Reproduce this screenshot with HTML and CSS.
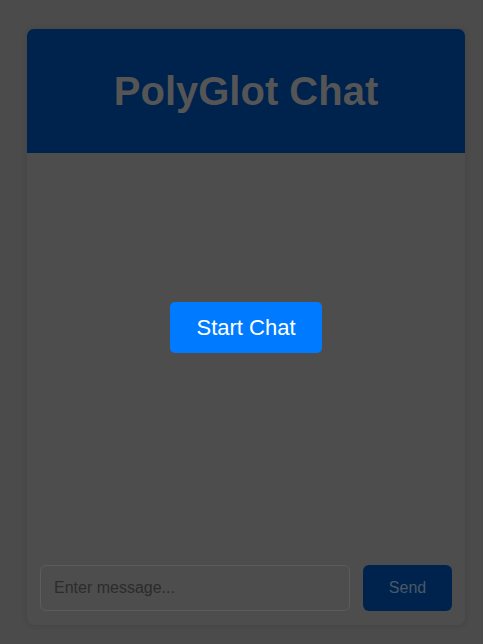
FILE: index.html
```html
<!DOCTYPE html>
<html lang="en">
<head>
<meta charset="utf-8">
<title>PolyGlot Chat</title>
<link rel="stylesheet" href="styles.css">
</head>
<body>
  <div class="chat">
    <header class="chat-header">
      <h1 class="chat-title">PolyGlot Chat</h1>
    </header>
    <main class="chat-messages"></main>
    <form class="chat-form">
      <input class="chat-input" type="text" placeholder="Enter message...">
      <button class="chat-send" type="button">Send</button>
    </form>
    <div class="chat-overlay">
      <button class="start-btn" type="button">Start Chat</button>
    </div>
  </div>
</body>
</html>
```

FILE: styles.css
```css
html, body {
  margin: 0;
  height: 100%;
}
body {
  background: #4b4b4b;
  font-family: "Liberation Sans", Arial, sans-serif;
  padding: 29px 18px 0 27px;
  box-sizing: border-box;
}
.chat {
  position: relative;
  width: 438px;
  height: 596px;
  background: #4d4d4d;
  border-radius: 7px;
  box-shadow: 0 0 6px rgba(0, 0, 0, 0.12);
  display: flex;
  flex-direction: column;
  overflow: hidden;
}
.chat-header {
  height: 124px;
  background: #00234d;
  display: flex;
  align-items: center;
  justify-content: center;
  flex-shrink: 0;
}
.chat-title {
  margin: 0;
  font-size: 40px;
  font-weight: bold;
  color: #555555;
  line-height: 1;
}
.chat-messages {
  flex: 1;
}
.chat-form {
  display: flex;
  gap: 13px;
  padding: 12px 13px 14px 13px;
  margin: 0;
}
.chat-input {
  flex: 1;
  height: 46px;
  box-sizing: border-box;
  border: 1px solid #5c5c5c;
  border-radius: 6px;
  background: #4d4d4d;
  padding: 0 13px;
  font-family: "Liberation Sans", Arial, sans-serif;
  font-size: 16px;
  color: #2b2b2b;
  outline: none;
}
.chat-input::placeholder {
  color: #2b2b2b;
  opacity: 1;
}
.chat-send {
  width: 89px;
  height: 46px;
  border: none;
  border-radius: 6px;
  background: #00234d;
  color: #4a5868;
  font-family: "Liberation Sans", Arial, sans-serif;
  font-size: 16px;
}
.chat-overlay {
  position: absolute;
  inset: 0;
  display: flex;
  align-items: center;
  justify-content: center;
}
.start-btn {
  background: #007bff;
  color: #fff;
  border: none;
  border-radius: 5px;
  padding: 12px 26px;
  line-height: 27px;
  font-family: "Liberation Sans", Arial, sans-serif;
  font-size: 22px;
}
```
